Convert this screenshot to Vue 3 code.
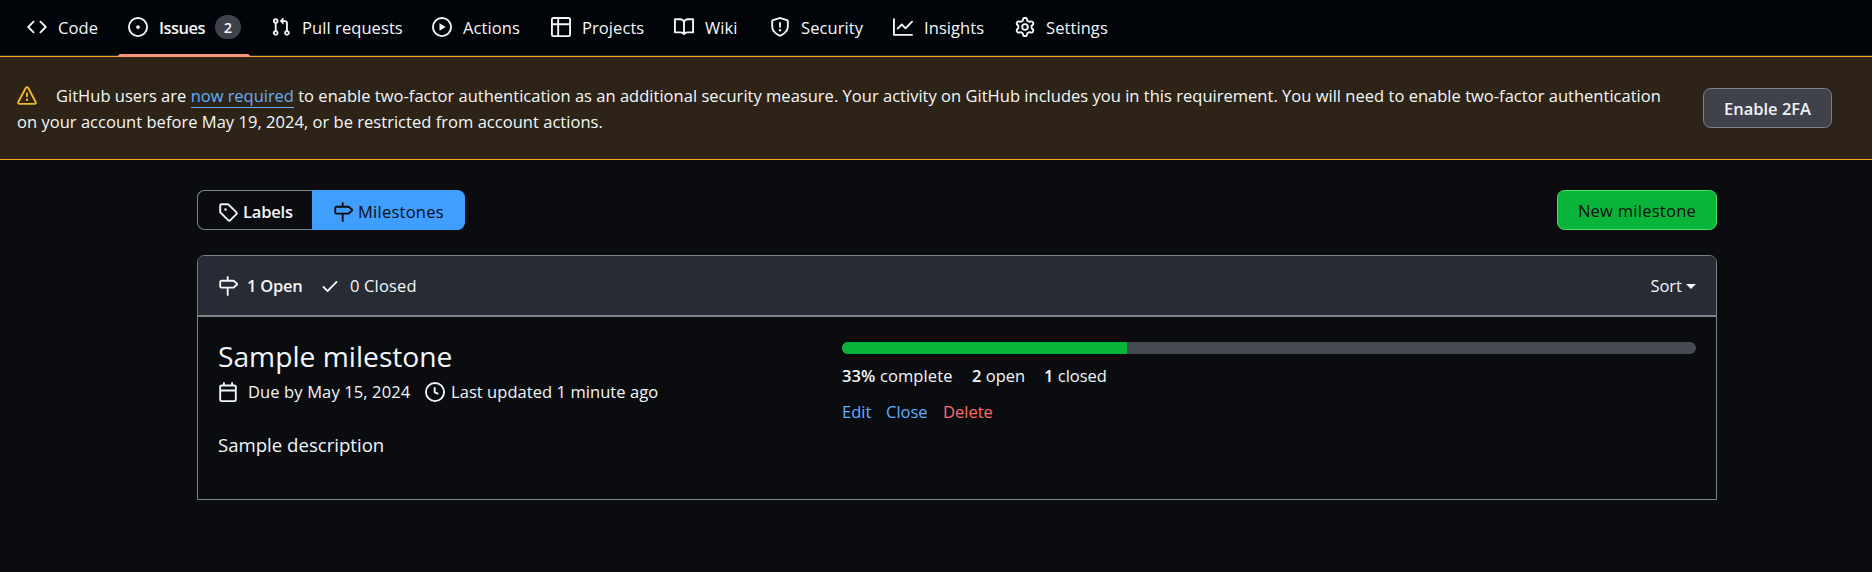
<script setup>
const icons = {
  code: 'm11.28 3.22 4.25 4.25a.75.75 0 0 1 0 1.06l-4.25 4.25a.749.749 0 0 1-1.275-.326.749.749 0 0 1 .215-.734L13.94 8l-3.72-3.72a.749.749 0 0 1 .326-1.275.749.749 0 0 1 .734.215Zm-6.56 0a.751.751 0 0 1 1.042.018.751.751 0 0 1 .018 1.042L2.06 8l3.72 3.72a.749.749 0 0 1-.326 1.275.749.749 0 0 1-.734-.215L.47 8.53a.75.75 0 0 1 0-1.06Z',
  issue: 'M8 9.5a1.5 1.5 0 1 0 0-3 1.5 1.5 0 0 0 0 3ZM8 0a8 8 0 1 1 0 16A8 8 0 0 1 8 0ZM1.5 8a6.5 6.5 0 1 0 13 0 6.5 6.5 0 0 0-13 0Z',
  pull: 'M1.5 3.25a2.25 2.25 0 1 1 3 2.122v5.256a2.251 2.251 0 1 1-1.5 0V5.372A2.25 2.25 0 0 1 1.5 3.25Zm5.677-.177L9.573.677A.25.25 0 0 1 10 .854V2.5h1A2.5 2.5 0 0 1 13.5 5v5.628a2.251 2.251 0 1 1-1.5 0V5a1 1 0 0 0-1-1h-1v1.646a.25.25 0 0 1-.427.177L7.177 3.427a.25.25 0 0 1 0-.354ZM3.75 2.5a.75.75 0 1 0 0 1.5.75.75 0 0 0 0-1.5Zm0 9.5a.75.75 0 1 0 0 1.5.75.75 0 0 0 0-1.5Zm8.25.75a.75.75 0 1 0 1.5 0 .75.75 0 0 0-1.5 0Z',
  play: 'M8 0a8 8 0 1 1 0 16A8 8 0 0 1 8 0ZM1.5 8a6.5 6.5 0 1 0 13 0 6.5 6.5 0 0 0-13 0Zm4.879-2.773 4.264 2.559a.25.25 0 0 1 0 .428l-4.264 2.559A.25.25 0 0 1 6 10.559V5.442a.25.25 0 0 1 .379-.215Z',
  table: 'M0 1.75C0 .784.784 0 1.75 0h12.5C15.216 0 16 .784 16 1.75v12.5A1.75 1.75 0 0 1 14.25 16H1.75A1.75 1.75 0 0 1 0 14.25ZM6.5 6.5v8h7.75a.25.25 0 0 0 .25-.25V6.5Zm8-1.5V1.75a.25.25 0 0 0-.25-.25H6.5V5Zm-13 1.5v7.75c0 .138.112.25.25.25H5v-8ZM5 5V1.5H1.75a.25.25 0 0 0-.25.25V5Z',
  book: 'M0 1.75A.75.75 0 0 1 .75 1h4.253c1.227 0 2.317.59 3 1.501A3.743 3.743 0 0 1 11.006 1h4.245a.75.75 0 0 1 .75.75v10.5a.75.75 0 0 1-.75.75h-4.507a2.25 2.25 0 0 0-1.591.659l-.622.621a.75.75 0 0 1-1.06 0l-.622-.621A2.25 2.25 0 0 0 5.258 13H.75a.75.75 0 0 1-.75-.75Zm7.251 10.324.004-5.073-.002-2.253A2.25 2.25 0 0 0 5.003 2.5H1.5v9h3.757a3.75 3.75 0 0 1 1.994.574ZM8.755 4.75l-.004 7.322a3.752 3.752 0 0 1 1.992-.572H14.5v-9h-3.495a2.25 2.25 0 0 0-2.25 2.25Z',
  shield: 'M7.467.133a1.748 1.748 0 0 1 1.066 0l5.25 1.68A1.75 1.75 0 0 1 15 3.48V7c0 1.566-.32 3.182-1.303 4.682-.983 1.498-2.585 2.813-5.032 3.855a1.697 1.697 0 0 1-1.33 0c-2.447-1.042-4.049-2.357-5.032-3.855C1.32 10.182 1 8.566 1 7V3.48a1.75 1.75 0 0 1 1.217-1.667Zm.61 1.429a.25.25 0 0 0-.153 0l-5.25 1.68a.25.25 0 0 0-.174.238V7c0 1.358.275 2.666 1.057 3.86.784 1.194 2.121 2.34 4.366 3.297a.196.196 0 0 0 .154 0c2.245-.956 3.582-2.104 4.366-3.298C13.225 9.666 13.5 8.36 13.5 7V3.48a.251.251 0 0 0-.174-.237l-5.25-1.68ZM8.75 4.75v3a.75.75 0 0 1-1.5 0v-3a.75.75 0 0 1 1.5 0ZM9 10.5a1 1 0 1 1-2 0 1 1 0 0 1 2 0Z',
  graph: 'M1.5 1.75V13.5h13.75a.75.75 0 0 1 0 1.5H.75a.75.75 0 0 1-.75-.75V1.75a.75.75 0 0 1 1.5 0Zm14.28 2.53-5.25 5.25a.75.75 0 0 1-1.06 0L7 7.06 4.28 9.78a.751.751 0 0 1-1.042-.018.751.751 0 0 1-.018-1.042l3.25-3.25a.75.75 0 0 1 1.06 0L10 7.94l4.72-4.72a.751.751 0 0 1 1.042.018.751.751 0 0 1 .018 1.042Z',
  gear: 'M8 0a8.2 8.2 0 0 1 .701.031C9.444.095 9.99.645 10.16 1.29l.288 1.107c.018.066.079.158.212.224.231.114.454.243.668.386.123.082.233.09.299.071l1.103-.303c.644-.176 1.392.021 1.82.63.27.385.506.792.704 1.218.315.675.111 1.422-.364 1.891l-.814.806c-.049.048-.098.147-.088.294.016.257.016.515 0 .772-.01.147.038.246.088.294l.814.806c.475.469.679 1.216.364 1.891a7.977 7.977 0 0 1-.704 1.217c-.428.61-1.176.807-1.82.63l-1.102-.302c-.067-.019-.177-.011-.3.071a5.909 5.909 0 0 1-.668.386c-.133.066-.194.158-.211.224l-.29 1.106c-.168.646-.715 1.196-1.458 1.26a8.006 8.006 0 0 1-1.402 0c-.743-.064-1.289-.614-1.458-1.26l-.289-1.106c-.018-.066-.079-.158-.212-.224a5.738 5.738 0 0 1-.668-.386c-.123-.082-.233-.09-.299-.071l-1.103.303c-.644.176-1.392-.021-1.82-.63a8.12 8.12 0 0 1-.704-1.218c-.315-.675-.111-1.422.363-1.891l.815-.806c.05-.048.098-.147.088-.294a6.214 6.214 0 0 1 0-.772c.01-.147-.038-.246-.088-.294l-.815-.806C.635 6.045.431 5.298.746 4.623a7.92 7.92 0 0 1 .704-1.217c.428-.61 1.176-.807 1.82-.63l1.102.302c.067.019.177.011.3-.071.214-.143.437-.272.668-.386.133-.066.194-.158.211-.224l.29-1.106C6.009.645 6.556.095 7.299.03 7.53.01 7.764 0 8 0Zm-.571 1.525c-.036.003-.108.036-.137.146l-.289 1.105c-.147.561-.549.967-.998 1.189-.173.086-.34.183-.5.29-.417.278-.97.423-1.529.27l-1.103-.303c-.109-.03-.175.016-.195.045-.22.312-.412.644-.573.99-.014.031-.021.11.059.19l.815.806c.411.406.562.957.53 1.456a4.709 4.709 0 0 0 0 .582c.032.499-.119 1.05-.53 1.456l-.815.806c-.081.08-.073.159-.059.19.162.346.353.677.573.989.02.03.085.076.195.046l1.102-.303c.56-.153 1.113-.008 1.53.27.161.107.328.204.501.29.447.222.85.629.997 1.189l.289 1.105c.029.109.101.143.137.146a6.6 6.6 0 0 0 1.142 0c.036-.003.108-.036.137-.146l.289-1.105c.147-.561.549-.967.998-1.189.173-.086.34-.183.5-.29.417-.278.97-.423 1.529-.27l1.103.303c.109.029.175-.016.195-.045.22-.313.411-.644.573-.99.014-.031.021-.11-.059-.19l-.815-.806c-.411-.406-.562-.957-.53-1.456a4.709 4.709 0 0 0 0-.582c-.032-.499.119-1.05.53-1.456l.815-.806c.081-.08.073-.159.059-.19a6.464 6.464 0 0 0-.573-.989c-.02-.03-.085-.076-.195-.046l-1.102.303c-.56.153-1.113.008-1.53-.27a4.44 4.44 0 0 0-.501-.29c-.447-.222-.85-.629-.997-1.189l-.289-1.105c-.029-.11-.101-.143-.137-.146a6.6 6.6 0 0 0-1.142 0ZM11 8a3 3 0 1 1-6 0 3 3 0 0 1 6 0ZM9.5 8a1.5 1.5 0 1 0-3.001.001A1.5 1.5 0 0 0 9.5 8Z',
  alert: 'M6.457 1.047c.659-1.234 2.427-1.234 3.086 0l6.082 11.378A1.75 1.75 0 0 1 14.082 15H1.918a1.75 1.75 0 0 1-1.543-2.575Zm1.763.707a.25.25 0 0 0-.44 0L1.698 13.132a.25.25 0 0 0 .22.368h12.164a.25.25 0 0 0 .22-.368Zm.53 3.996v2.5a.75.75 0 0 1-1.5 0v-2.5a.75.75 0 0 1 1.5 0ZM9 11a1 1 0 1 1-2 0 1 1 0 0 1 2 0Z',
  tag: 'M1 7.775V2.75C1 1.784 1.784 1 2.75 1h5.025c.464 0 .91.184 1.238.513l6.25 6.25a1.75 1.75 0 0 1 0 2.474l-5.026 5.026a1.75 1.75 0 0 1-2.474 0l-6.25-6.25A1.752 1.752 0 0 1 1 7.775Zm1.5 0c0 .066.026.13.073.177l6.25 6.25a.25.25 0 0 0 .354 0l5.025-5.025a.25.25 0 0 0 0-.354l-6.25-6.25a.25.25 0 0 0-.177-.073H2.75a.25.25 0 0 0-.25.25ZM6 5a1 1 0 1 1 0 2 1 1 0 0 1 0-2Z',
  milestone: 'M7.75 0a.75.75 0 0 1 .75.75V3h3.634c.414 0 .814.147 1.13.414l2.07 1.75a1.75 1.75 0 0 1 0 2.672l-2.07 1.75a1.75 1.75 0 0 1-1.13.414H8.5v5.25a.75.75 0 0 1-1.5 0V10H2.75A1.75 1.75 0 0 1 1 8.25v-3.5C1 3.784 1.784 3 2.75 3H7V.75A.75.75 0 0 1 7.75 0Zm4.384 8.5a.25.25 0 0 0 .161-.059l2.07-1.75a.248.248 0 0 0 0-.382l-2.07-1.75a.25.25 0 0 0-.161-.059H2.75a.25.25 0 0 0-.25.25v3.5c0 .138.112.25.25.25h9.384Z',
  check: 'M13.78 4.22a.75.75 0 0 1 0 1.06l-7.25 7.25a.75.75 0 0 1-1.06 0L2.22 9.28a.751.751 0 0 1 .018-1.042.751.751 0 0 1 1.042-.018L6 10.94l6.72-6.72a.75.75 0 0 1 1.06 0Z',
  calendar: 'M4.75 0a.75.75 0 0 1 .75.75V2h5V.75a.75.75 0 0 1 1.5 0V2h1.25c.966 0 1.75.784 1.75 1.75v10.5A1.75 1.75 0 0 1 13.25 16H2.75A1.75 1.75 0 0 1 1 14.25V3.75C1 2.784 1.784 2 2.75 2H4V.75A.75.75 0 0 1 4.75 0ZM2.5 7.5v6.75c0 .138.112.25.25.25h10.5a.25.25 0 0 0 .25-.25V7.5Zm10.75-4H2.75a.25.25 0 0 0-.25.25V6h11V3.75a.25.25 0 0 0-.25-.25Z',
  clock: 'M8 0a8 8 0 1 1 0 16A8 8 0 0 1 8 0ZM1.5 8a6.5 6.5 0 1 0 13 0 6.5 6.5 0 0 0-13 0Zm7-3.25v2.992l2.028.812a.75.75 0 0 1-.557 1.392l-2.5-1A.751.751 0 0 1 7 8.25v-3.5a.75.75 0 0 1 1.5 0Z',
}

const tabs = [
  { name: 'code', label: 'Code', icon: 'code' },
  { name: 'issues', label: 'Issues', icon: 'issue', count: 2, current: true },
  { name: 'pulls', label: 'Pull requests', icon: 'pull' },
  { name: 'actions', label: 'Actions', icon: 'play' },
  { name: 'projects', label: 'Projects', icon: 'table' },
  { name: 'wiki', label: 'Wiki', icon: 'book' },
  { name: 'security', label: 'Security', icon: 'shield' },
  { name: 'insights', label: 'Insights', icon: 'graph' },
  { name: 'settings', label: 'Settings', icon: 'gear' },
]

const progress = 100 / 3
</script>

<template>
  <div class="page">
    <nav class="nav">
      <a v-for="t in tabs" :key="t.name" class="tab" :class="[t.name, { current: t.current }]">
        <svg class="icon" viewBox="0 0 16 16"><path :d="icons[t.icon]" /></svg>
        <span class="label">{{ t.label }}</span>
        <span v-if="t.count" class="counter">{{ t.count }}</span>
      </a>
    </nav>

    <section class="banner">
      <div class="notice">
        <div class="line first">
          <svg class="icon warn" viewBox="0 0 16 16"><path :d="icons.alert" /></svg>
          <span class="sentence">GitHub users are <a class="required">now required</a> to enable two-factor authentication as an additional security measure. Your activity on GitHub includes you in this requirement. You will need to enable two-factor authentication</span>
        </div>
        <div class="line second">on your account before May 19, 2024, or be restricted from account actions.</div>
      </div>
      <button class="btn enable">Enable 2FA</button>
    </section>

    <main class="content">
      <div class="toolbar">
        <div class="subnav">
          <a class="sub labels"><svg class="icon" viewBox="0 0 16 16"><path :d="icons.tag" /></svg><span class="label">Labels</span></a>
          <a class="sub milestones"><svg class="icon" viewBox="0 0 16 16"><path :d="icons.milestone" /></svg><span class="label">Milestones</span></a>
        </div>
        <button class="btn create">New milestone</button>
      </div>

      <div class="box">
        <header class="box-head">
          <a class="state open"><svg class="icon" viewBox="0 0 16 16"><path :d="icons.milestone" /></svg><span class="label">1 Open</span></a>
          <a class="state"><svg class="icon" viewBox="0 0 16 16"><path :d="icons.check" /></svg><span class="label">0 Closed</span></a>
          <a class="sort"><span class="label">Sort</span><i class="caret"></i></a>
        </header>
        <div class="row">
          <div class="info">
            <h2 class="title">Sample milestone</h2>
            <div class="meta">
              <svg class="icon" viewBox="0 0 16 16"><path :d="icons.calendar" /></svg>
              <span class="due">Due by May 15, 2024</span>
              <svg class="icon" viewBox="0 0 16 16"><path :d="icons.clock" /></svg>
              <span class="updated">Last updated 1 minute ago</span>
            </div>
            <p class="desc">Sample description</p>
          </div>
          <div class="stats">
            <div class="bar"><div class="fill" :style="{ width: progress + '%' }"></div></div>
            <div class="figures">
              <span class="complete"><b>33%</b> complete</span>
              <span class="opened"><b>2</b> open</span>
              <span><b>1</b> closed</span>
            </div>
            <div class="links">
              <a class="edit">Edit</a>
              <a class="close">Close</a>
              <a class="delete">Delete</a>
            </div>
          </div>
        </div>
      </div>
    </main>
  </div>
</template>

<style>
html, body { background: #0a0c10; overflow: hidden; }
</style>

<style scoped>
.page {
  box-sizing: border-box;
  height: 572px;
  background: #0a0c10;
  color: #f4f7fa;
  font-family: "Open Sans", "Noto Sans", sans-serif;
  font-size: 16.5px;
  line-height: 26px;
  white-space: nowrap;
}
.page *, .page *::after { box-sizing: border-box; }
.icon { flex: none; display: block; width: 20px; height: 20px; fill: currentColor; }
.label { padding-top: 1px; }

.nav {
  display: flex;
  height: 56px;
  padding: 0 17px;
  background: #010409;
  border-bottom: 1px solid #2b2e34;
}
.tab {
  position: relative;
  flex: none;
  display: flex;
  align-items: center;
  height: 54px;
  padding-left: 10px;
}
.tab .label { margin-left: 11px; letter-spacing: 0.08px; }
.code { width: 101px; }
.issues { width: 143px; }
.pulls { width: 161px; }
.actions { width: 119px; }
.projects { width: 123px; }
.wiki { width: 96px; }
.security { width: 123px; }
.insights { width: 122px; }
.tab.current .label { font-weight: 600; width: 56px; letter-spacing: -0.5px; }
.current::after {
  content: "";
  position: absolute;
  left: 0;
  top: 54px;
  width: 132px;
  height: 3px;
  border-radius: 3px 3px 0 0;
  background: #ff967d;
}
.counter {
  width: 26px;
  height: 24px;
  border-radius: 12px;
  background: #3f424b;
  font-size: 14.5px;
  font-weight: 600;
  line-height: 25px;
  text-align: center;
}

.banner {
  display: flex;
  justify-content: space-between;
  height: 104px;
  padding: 26px 40px 0 17px;
  background: #2d2417;
  border-top: 1px solid #f0a91f;
  border-bottom: 1px solid #f0a91f;
}
.line { display: flex; height: 26px; align-items: center; }
.sentence { letter-spacing: 0.02px; }
.second { letter-spacing: 0.03px; }
.warn { color: #f0b72f; margin-right: 19px; }
.required { color: #62aeff; border-bottom: 1px solid #62aeff; letter-spacing: -0.03px; }
.btn {
  height: 40px;
  padding: 2px 0 0;
  border-radius: 7.5px;
  font: inherit;
  font-size: 16.5px;
}
.enable {
  width: 129px;
  margin-top: 5px;
  border: 1px solid #7a828e;
  background: #3f424b;
  color: #f0f3f6;
  font-weight: 600;
}

.content { width: 1520px; margin: 30px 0 0 197px; }
.toolbar { display: flex; justify-content: space-between; }
.subnav { display: flex; }
.sub { display: flex; align-items: center; height: 40px; gap: 5px; padding-top: 3px; }
.labels {
  width: 115px;
  padding-left: 20px;
  border: 1px solid #7a828e;
  border-right: 0;
  border-radius: 7.5px 0 0 7.5px;
  font-weight: 600;
}
.labels .label { letter-spacing: -0.2px; }
.sub .label { padding: 0; }
.milestones {
  width: 153px;
  padding-left: 21px;
  border-radius: 0 7.5px 7.5px 0;
  background: #409eff;
  color: #0a0c10;
}
.milestones .label { letter-spacing: 0.25px; }
.create { width: 160px; border: 1px solid #4ae168; background: #09b43a; color: #0a0c10; letter-spacing: 0.27px; }

.box { height: 245px; margin-top: 25px; border: 1px solid #7a828e; border-radius: 7.5px 7.5px 0 0; }
.box-head {
  display: flex;
  align-items: center;
  height: 61px;
  padding: 0 20px;
  background: #272b33;
  border-bottom: 2px solid #7a828e;
  border-radius: 6.5px 6.5px 0 0;
}
.state, .sort { display: flex; align-items: center; }
.state { width: 106px; }
.state .label { margin-left: 10px; letter-spacing: 0.15px; }
.state.open { width: 102px; font-weight: 600; }
.state.open .label { margin-left: 9px; letter-spacing: -0.25px; }
.sort { margin-left: auto; gap: 4px; }
.caret { margin-top: 2px; border: 5px solid transparent; border-top-color: currentColor; border-bottom: 0; }

.row { display: flex; padding: 20px 20px 0; }
.info { width: 624px; }
.title { margin: 1px 0 0; font-size: 28.2px; font-weight: 400; line-height: 36px; }
.meta { display: flex; align-items: center; height: 26px; margin-top: 5px; }
.due { width: 177px; margin-left: 10px; letter-spacing: 0.12px; }
.updated { margin-left: 6px; letter-spacing: 0.06px; }
.desc { margin: 27px 0 0; font-size: 18.6px; }
.stats { flex: 1; }
.bar { height: 12px; margin-top: 5px; border-radius: 7.5px; background: #464a52; overflow: hidden; }
.fill { height: 100%; background: #09b43a; }
.figures { display: flex; margin-top: 9px; }
.complete { width: 130px; letter-spacing: 0.12px; }
.opened { width: 72px; }
.figures b { font-weight: 600; }
.links { display: flex; margin-top: 10px; }
.edit { width: 44px; color: #62aeff; }
.close { width: 57px; color: #62aeff; }
.delete { color: #ff6a69; }
</style>
